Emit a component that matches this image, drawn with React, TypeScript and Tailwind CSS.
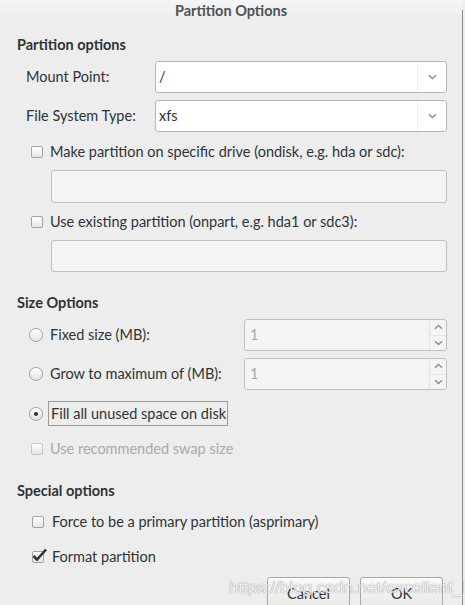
import React from "react";

const font = { fontFamily: '"Lato", "Noto Sans", "Liberation Sans", sans-serif' };

function Chevron({ up = false }: { up?: boolean }) {
  return (
    <svg width="9" height="6" viewBox="0 0 9 6" className={up ? "rotate-180" : ""}>
      <path d="M1 1.2 L4.5 4.6 L8 1.2" fill="none" stroke="#8a8d8e" strokeWidth="1.4" />
    </svg>
  );
}

function Combo({ value }: { value: string }) {
  return (
    <div className="flex h-[32px] w-[292px] rounded-[3px] border border-[#b6b6b3] bg-white">
      <div className="flex flex-1 items-center pl-[3px] text-[14.5px] text-[#2e3436]">{value}</div>
      <div className="flex w-[29px] items-center justify-center border-l border-[#efefef]">
        <Chevron />
      </div>
    </div>
  );
}

function Check({ checked = false, disabled = false }: { checked?: boolean; disabled?: boolean }) {
  return (
    <div className="relative h-[12px] w-[12px]">
      <div
        className={
          "h-[12px] w-[12px] rounded-[2px] border bg-gradient-to-b from-white to-[#e6e6e6] " +
          (disabled ? "border-[#c6c6c6]" : "border-[#a2a2a2]")
        }
      />
      {checked && (
        <svg width="16" height="14" viewBox="0 0 16 14" className="absolute left-[0px] top-[-3px]">
          <path d="M1.5 8 L5 11.5 L14 1.5" fill="none" stroke="#2e3436" strokeWidth="2.6" />
        </svg>
      )}
    </div>
  );
}

function Radio({ on = false }: { on?: boolean }) {
  return (
    <div className="flex h-[14px] w-[14px] items-center justify-center rounded-full border border-[#a2a2a2] bg-gradient-to-b from-white to-[#e4e4e4]">
      {on && <div className="h-[4px] w-[4px] rounded-full bg-[#2e3436]" />}
    </div>
  );
}

function Spin() {
  return (
    <div className="flex h-[32px] w-[203px] rounded-[3px] border border-[#c0c0bd] bg-[#f4f4f3]">
      <div className="flex flex-1 items-center pl-[5px] text-[14.5px] text-[#a4a6a7]">1</div>
      <div className="flex w-[17px] flex-col border-l border-[#e2e2e0]">
        <div className="flex flex-1 items-center justify-center border-b border-[#e6e6e4]">
          <Chevron up />
        </div>
        <div className="flex flex-1 items-center justify-center">
          <Chevron />
        </div>
      </div>
    </div>
  );
}

function Header({ children, mt }: { children: React.ReactNode; mt: string }) {
  return (
    <div className={"flex h-[20px] items-center pl-[17px] text-[14.5px] font-bold text-[#2e3436] " + mt}>
      {children}
    </div>
  );
}

export default function App() {
  return (
    <div className="relative flex h-[605px] w-[465px] items-start overflow-hidden bg-[#ededed]" style={font}>
      <div className="flex w-[462px] shrink-0 flex-col [&>*]:shrink-0">
        <div className="flex h-[19px] items-start justify-center bg-gradient-to-b from-[#f6f6f6] to-[#ededed] text-[14.5px] font-bold text-[#4b5356]">
          Partition Options
        </div>

        <Header mt="mt-[16px]">Partition options</Header>

        <div className="mt-[6px] flex items-center">
          <div className="w-[155px] pl-[26px] text-[14.5px] text-[#2e3436]">Mount Point:</div>
          <Combo value="/" />
        </div>
        <div className="mt-[7px] flex items-center">
          <div className="w-[155px] pl-[26px] text-[14.5px] text-[#2e3436]">File System Type:</div>
          <Combo value="xfs" />
        </div>

        <div className="mt-[10px] flex h-[20px] items-center pl-[31px]">
          <Check />
          <span className="ml-[7px] text-[14.5px] text-[#2e3436]">
            Make partition on specific drive (ondisk, e.g. hda or sdc):
          </span>
        </div>
        <div className="ml-[51px] mt-[8px] h-[33px] w-[396px] rounded-[3px] border border-[#c0c0bd] bg-[#f4f4f3]" />

        <div className="mt-[9px] flex h-[20px] items-center pl-[31px]">
          <Check />
          <span className="ml-[7px] text-[14.5px] text-[#2e3436]">
            Use existing partition (onpart, e.g. hda1 or sdc3):
          </span>
        </div>
        <div className="ml-[51px] mt-[8px] h-[32px] w-[396px] rounded-[3px] border border-[#c0c0bd] bg-[#f4f4f3]" />

        <Header mt="mt-[21px]">Size Options</Header>

        <div className="mt-[6px] flex items-center">
          <div className="flex w-[244px] items-center pl-[29px]">
            <Radio />
            <span className="ml-[7px] text-[14.5px] text-[#2e3436]">Fixed size (MB):</span>
          </div>
          <Spin />
        </div>
        <div className="mt-[7px] flex items-center">
          <div className="flex w-[244px] items-center pl-[29px]">
            <Radio />
            <span className="ml-[7px] text-[14.5px] text-[#2e3436]">Grow to maximum of (MB):</span>
          </div>
          <Spin />
        </div>

        <div className="mt-[11px] flex h-[25px] items-center pl-[29px]">
          <Radio on />
          <span className="ml-[5px] flex h-[25px] items-center border border-[#9a9a9a] pl-[2px] pr-[1px] text-[14.5px] text-[#2e3436]">
            Fill all unused space on disk
          </span>
        </div>

        <div className="mt-[13px] flex h-[20px] items-center pl-[31px]">
          <Check disabled />
          <span className="ml-[7px] text-[14.5px] text-[#a8aaab]">Use recommended swap size</span>
        </div>

        <Header mt="mt-[22px]">Special options</Header>

        <div className="mt-[11px] flex h-[20px] items-center pl-[32px]">
          <Check />
          <span className="ml-[8px] text-[14.5px] text-[#2e3436]">Force to be a primary partition (asprimary)</span>
        </div>
        <div className="mt-[15px] flex h-[20px] items-center pl-[32px]">
          <Check checked />
          <span className="ml-[8px] text-[14.5px] text-[#2e3436]">Format partition</span>
        </div>

        <div className="mt-[10px] flex justify-end gap-[10px] pr-[19px]">
          <div className="flex h-[34px] w-[83px] items-center justify-center rounded-[3px] border border-[#a9a9a6] bg-gradient-to-b from-[#fafafa] to-[#e6e6e5] text-[14.5px] text-[#2e3436]">
            Cancel
          </div>
          <div className="flex h-[34px] w-[83px] items-center justify-center rounded-[3px] border border-[#a9a9a6] bg-gradient-to-b from-[#fafafa] to-[#e6e6e5] text-[14.5px] text-[#2e3436]">
            OK
          </div>
        </div>
      </div>
      <div className="mt-[10px] h-[595px] w-[1px] bg-[#8c8c8c]" />
      <div className="flex-1" />

      <div
        className="absolute left-[229px] top-[575px] text-[17px] text-white/90 [text-shadow:0_0_1px_rgba(0,0,0,0.6)]"
        style={{ fontFamily: '"Liberation Sans", sans-serif' }}
      >
        https://blog.csdn.net/excellent_L
      </div>
    </div>
  );
}
